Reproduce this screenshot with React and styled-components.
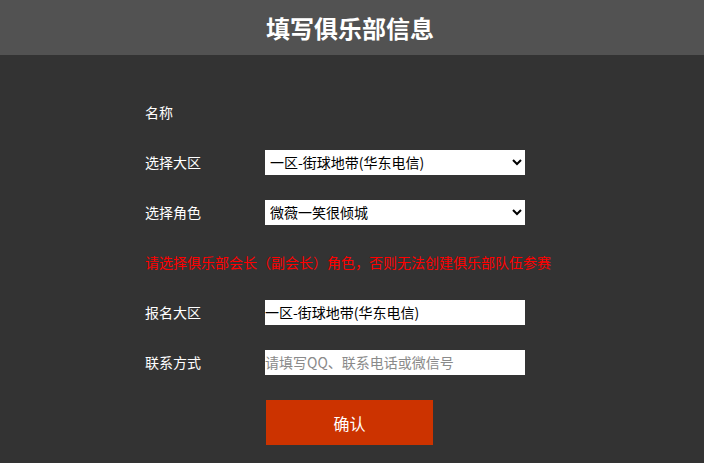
import React from 'react'
import styled, { createGlobalStyle } from 'styled-components'

const GlobalStyle = createGlobalStyle`
  html, body {
    margin: 0;
    padding: 0;
    background: #333333;
    font-family: "Microsoft YaHei", "Noto Sans CJK SC", "Noto Sans", sans-serif;
  }
`

export default function App() {
  return (
    <Page>
      <GlobalStyle />
      <Header>填写俱乐部信息</Header>
      <Form>
        <Row>
          <Label>名称</Label>
        </Row>
        <Row>
          <Label>选择大区</Label>
          <Select defaultValue="1">
            <option value="1">一区-街球地带(华东电信)</option>
          </Select>
        </Row>
        <Row>
          <Label>选择角色</Label>
          <Select defaultValue="1">
            <option value="1">微薇一笑很倾城</option>
          </Select>
        </Row>
        <Row>
          <Warning>请选择俱乐部会长（副会长）角色，否则无法创建俱乐部队伍参赛</Warning>
        </Row>
        <Row>
          <Label>报名大区</Label>
          <Input defaultValue="一区-街球地带(华东电信)" readOnly />
        </Row>
        <Row>
          <Label>联系方式</Label>
          <Input placeholder="请填写QQ、联系电话或微信号" />
        </Row>
        <Actions>
          <Submit type="button">确认</Submit>
        </Actions>
      </Form>
    </Page>
  )
}

const Page = styled.div`
  width: 704px;
  min-height: 463px;
  background: #333333;
`

const Header = styled.h1`
  margin: 0;
  height: 55px;
  line-height: 55px;
  background: #525252;
  color: #ffffff;
  text-align: center;
  font-size: 24px;
  font-weight: bold;
  padding-right: 4px;
`

const Form = styled.div`
  display: flex;
  flex-direction: column;
  padding: 32px 0 0 145px;
`

const Row = styled.div`
  display: flex;
  align-items: center;
  height: 50px;
`

const Label = styled.span`
  width: 120px;
  color: #ffffff;
  font-size: 14px;
`

const Warning = styled.span`
  color: #ff0000;
  font-size: 14px;
`

const Select = styled.select`
  width: 260px;
  height: 25px;
  border: none;
  outline: none;
  background: #ffffff;
  color: #000000;
  font-family: inherit;
  font-size: 14px;
  padding: 0 0 0 1px;
`

const Input = styled.input`
  box-sizing: border-box;
  width: 260px;
  height: 25px;
  border: none;
  outline: none;
  padding: 0;
  background: #ffffff;
  color: #000000;
  font-family: inherit;
  font-size: 14px;

  &::placeholder {
    color: #8a8a8a;
  }
`

const Actions = styled.div`
  display: flex;
  padding: 13px 0 0 121px;
`

const Submit = styled.button`
  width: 167px;
  height: 45px;
  border: none;
  background: #cc3300;
  color: #ffffff;
  font-family: inherit;
  font-size: 16px;
  cursor: pointer;
`
